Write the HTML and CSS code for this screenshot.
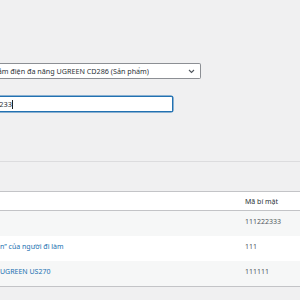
FILE: index.html
```html
<!DOCTYPE html>
<html lang="vi">
<head>
  <meta charset="UTF-8" />
  <meta name="viewport" content="width=device-width, initial-scale=1.0"/>
  <title>Mã bí mật</title>
  <link rel="stylesheet" href="styles.css">
</head>
<body>
  <div class="page">
    <div class="form">
      <div class="select-box">
        <div class="clip">
          <span class="select-text">Sạc điện thoại / Ổ cắm điện đa năng UGREEN CD286 (Sản phẩm)</span>
        </div>
        <svg class="chevron" width="7" height="5" viewBox="0 0 7 5">
          <path d="M1 1 L3.5 3.5 L6 1" fill="none" stroke="#50575e" stroke-width="1.1"/>
        </svg>
      </div>
      <div class="text-input">
        <div class="clip input-clip">
          <span class="input-text">111222233</span>
        </div>
        <span class="caret"></span>
      </div>
    </div>

    <div class="divider"></div>

    <div class="table">
      <div class="row head">
        <div class="cell name"></div>
        <div class="cell code">Mã bí mật</div>
      </div>
      <div class="row alt">
        <div class="cell name"></div>
        <div class="cell code">111222333</div>
      </div>
      <div class="row">
        <div class="cell name"><a href="#">n” của người đi làm</a></div>
        <div class="cell code">111</div>
      </div>
      <div class="row alt">
        <div class="cell name"><a href="#">UGREEN US270</a></div>
        <div class="cell code">111111</div>
      </div>
    </div>
  </div>
</body>
</html>
```

FILE: styles.css
```css
body {
  margin: 0;
  background-color: #f0f0f1;
  font-family: 'Noto Sans', 'Open Sans', sans-serif;
  font-size: 7px;
  color: #3c434a;
  overflow: hidden;
}

.page {
  padding-top: 63px;
}

.form {
  display: flex;
  flex-direction: column;
  gap: 17px;
}

.clip {
  display: flex;
  justify-content: flex-end;
  overflow: hidden;
  white-space: nowrap;
}

.select-box {
  width: 200px;
  height: 14px;
  display: flex;
  align-items: center;
  background: #fff;
  border: 1px solid #8c8f94;
  border-left: none;
  border-radius: 0 2px 2px 0;
  color: #2c3338;
  font-size: 7.2px;
}

.select-box .clip {
  width: 149px;
  flex-shrink: 0;
}

.chevron {
  margin-left: auto;
  margin-right: 5px;
}

.text-input {
  width: 172px;
  height: 14px;
  display: flex;
  align-items: center;
  background: #fff;
  border: 1px solid #2271b1;
  border-left: none;
  border-radius: 0 2px 2px 0;
  box-shadow: 0 0 0 0.5px #2271b1;
  color: #2c3338;
  font-size: 7.4px;
}

.input-clip {
  width: 12px;
  flex-shrink: 0;
}

.caret {
  width: 1px;
  height: 9px;
  background: #1d2327;
}

.divider {
  margin-top: 49px;
  border-top: 1px solid #dcdcde;
}

.table {
  margin-top: 29px;
  border-top: 1px solid #c3c4c7;
  border-bottom: 1px solid #c3c4c7;
  background: #fff;
}

.row {
  display: grid;
  grid-template-columns: 245px 1fr;
  height: 25px;
  align-items: start;
}

.row.head {
  height: 18px;
  border-bottom: 1px solid #c3c4c7;
}

.row.alt {
  background: #f6f7f7;
}

.cell {
  padding-top: 6px;
  white-space: nowrap;
  line-height: 9px;
}

.row.head .cell {
  padding-top: 5px;
}

.name a {
  color: #2271b1;
  text-decoration: none;
}

.code {
  color: #50575e;
}

.row.head .code {
  color: #2c3338;
}
```
